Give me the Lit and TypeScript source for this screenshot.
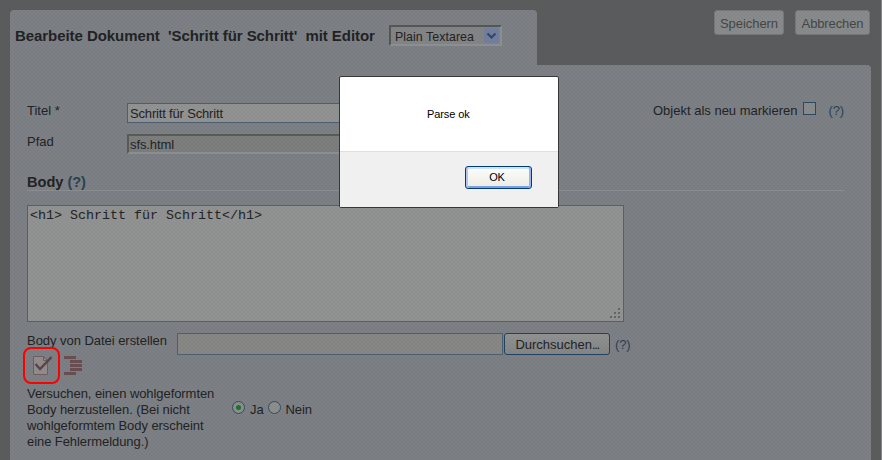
import { LitElement, html, css } from "lit";
import { customElement } from "lit/decorators.js";

@customElement("app-root")
export class AppRoot extends LitElement {
  static styles = css`
    :host { display: block; font: 13px/16px "Liberation Sans", Arial, sans-serif; color: #1f2123; }
    * { box-sizing: border-box; }
    .page { position: relative; display: flex; flex-direction: column; width: 882px; height: 460px; overflow: hidden; background: #5a5c5c; border-right: 1px solid #858788; }
    .veil { position: absolute; inset: 0; background: radial-gradient(circle, rgba(60, 72, 80, 0.07) 0.8px, transparent 1.3px) 0 0 / 4px 4px, radial-gradient(circle, rgba(60, 72, 80, 0.07) 0.8px, transparent 1.3px) 2px 2px / 4px 4px; pointer-events: none; }
    .top { display: flex; height: 55px; margin: 10px 0 0 10px; }
    .tab { width: 527px; border-radius: 4px 4px 0 0; background: #7d8084; display: flex; align-items: flex-start; padding: 15px 0 0 5px; }
    h1 { margin: 2px 0 0; width: 374px; font-size: 15px; line-height: 17px; font-weight: bold; white-space: pre; letter-spacing: -0.06px; }
    .select { width: 113px; height: 21px; border: 2px solid; border-color: #555753 #8f9191 #8f9191 #555753; background: #838586; display: flex; justify-content: space-between; padding: 1px 1px 0 4px; font-size: 12.4px; line-height: 18px; letter-spacing: 0.05px; }
    .arrow { width: 15px; height: 15px; background: #7280a0; border-radius: 2px; display: block; }
    .actions { display: flex; gap: 11px; margin-left: 177px; }
    .action { height: 25px; border: 1px solid #777979; border-radius: 3px; background: #898b8c; color: #444646; font: inherit; padding: 2px 0 0; }
    .save { width: 70px; letter-spacing: -0.05px; }
    .cancel { width: 75px; letter-spacing: -0.12px; }
    .panel { width: 861px; height: 395px; margin-left: 10px; border-radius: 0 4px 0 0; background: #7d8084; padding: 38px 27px 0 17px; }
    .row { display: flex; align-items: flex-start; }
    .label { width: 100px; }
    .field { height: 20px; width: 330px; border: 1px solid #4d6072; background: #929393; color: inherit; font: inherit; letter-spacing: -0.17px; padding: 1px 2px 0; margin: 0; border-radius: 0; }
    .path { height: 20px; border: 2px solid; border-color: #595b57 #8e9090 #8e9090 #595b57; background: #7d7f7e; padding: 1px 1px 0; letter-spacing: -0.1px; }
    .right { margin-left: 196px; display: flex; }
    .check { width: 13px; height: 13px; border: 1px solid #2c4862; background: #898b8c; margin: -1px 13px 0 5px; }
    .help { color: #2a4053; letter-spacing: -0.2px; }
    .second { margin-top: 11px; }
    h2 { margin: 19px 0 0; height: 18px; padding-top: 1px; border-bottom: 1px solid #8d8f90; font-size: 14.6px; line-height: 17px; letter-spacing: 0; }
    textarea { display: block; margin: 14px 0 0; width: 597px; height: 117px; resize: none; border: 1px solid #506375; border-radius: 0; background: #929393; color: #1f2123; padding: 2px 2px; font: 13.33px/15px "Liberation Mono", "Courier New", monospace; outline: none; }
    .area { position: relative; width: 597px; }
    .grip { position: absolute; right: 3px; bottom: 3px; }
    .filerow { margin-top: 11px; height: 22px; }
    .filelabel { width: 150px; letter-spacing: -0.04px; }
    .file { width: 326px; height: 22px; background: #888884; }
    .browse { width: 106px; height: 22px; margin: 0 5px 0 1px; padding: 2px 0 0; font: inherit; color: inherit; border: 1px solid #21425f; border-radius: 3px; background: linear-gradient(#929393, #848686); }
    .dots { letter-spacing: -1.4px; }
    .filerow .help { margin-top: 4px; }
    .icons { position: relative; z-index: 1; display: flex; height: 20px; padding-left: 5px; gap: 10px; }
    .ring { position: absolute; left: -4px; top: -8px; width: 37px; height: 37px; border: 2px solid #ff0000; border-radius: 8px; }
    .wellformed { margin-top: 11px; }
    .text { width: 205px; letter-spacing: -0.07px; }
    .radios { display: flex; margin-top: 16px; }
    .radio { width: 13px; height: 13px; border: 1px solid #314c65; border-radius: 50%; background: #8d8f8f; margin: -1px 5px 0 0; display: flex; align-items: center; justify-content: center; }
    .radio + span { margin-right: 4px; letter-spacing: -0.1px; }
    .on { width: 5px; height: 5px; border-radius: 50%; background: #1c7328; }
    .dialog { position: absolute; z-index: 2; left: 339px; top: 76px; width: 220px; height: 132px; background: #fff; border: 1px solid #363738; border-radius: 2px; color: #000; font-size: 11px; line-height: 14px; display: flex; flex-direction: column; overflow: hidden; }
    .message { height: 74px; padding: 30px 0 0 87px; letter-spacing: -0.1px; }
    .foot { flex: 1; background: #f0f0f0; border-top: 1px solid #dfdfdf; display: flex; justify-content: flex-end; align-items: flex-start; padding: 14px 26px 0 0; }
    .ok { width: 67px; height: 23px; padding: 0 3px 1px 0; font: inherit; letter-spacing: -0.3px; border: 1px solid #003c74; border-radius: 3px; background: linear-gradient(#fdfdfc, #ecebe4); box-shadow: inset 2px 0 #b0c8ef, inset -2px 0 #98b5ea, inset 0 2px #cfe2fb, inset 0 -2px #7c9ee2; }
  `;

  render() {
    return html`
      <div class="page">
        <div class="top">
          <div class="tab">
            <h1>Bearbeite Dokument  'Schritt für Schritt'  mit Editor</h1>
            <div class="select">Plain Textarea
              <svg class="arrow" viewBox="0 0 15 15"><path d="M3.5 5.5l4 4 4-4" fill="none" stroke="#354564" stroke-width="2.2"/></svg>
            </div>
          </div>
          <div class="actions">
            <button class="action save">Speichern</button>
            <button class="action cancel">Abbrechen</button>
          </div>
        </div>
        <div class="panel">
          <div class="row">
            <span class="label">Titel *</span>
            <input class="field" .value=${"Schritt für Schritt"} />
            <div class="right"><span>Objekt als neu markieren</span><span class="check"></span><span class="help">(?)</span></div>
          </div>
          <div class="row second">
            <span class="label">Pfad</span>
            <input class="field path" readonly .value=${"sfs.html"} />
          </div>
          <h2>Body <span class="help">(?)</span></h2>
          <div class="area">
            <textarea spellcheck="false" .value=${"<h1> Schritt für Schritt</h1>"}></textarea>
            <svg class="grip" width="11" height="11" fill="#646663">
              <path d="M8 0h2v2h-2zM4 4h2v2h-2zM8 4h2v2h-2zM0 8h2v2h-2zM4 8h2v2h-2zM8 8h2v2h-2z"/>
            </svg>
          </div>
          <div class="row filerow">
            <span class="filelabel">Body von Datei erstellen</span>
            <input class="field file" />
            <button class="browse">Durchsuchen<span class="dots">...</span></button>
            <span class="help">(?)</span>
          </div>
          <div class="icons">
            <svg width="20" height="20" viewBox="0 0 20 20">
              <path d="M1.500 1.500h10l4 4v14h-14z" fill="#8f8b8c" stroke="#735b5c"/>
              <path d="M11.500 1.500v4h4" fill="none" stroke="#735b5c"/>
              <path d="M3.500 9L8 14 19.500 2" fill="none" stroke="#5c4245" stroke-width="2.4"/>
            </svg>
            <svg width="20" height="20" viewBox="0 0 20 20" fill="#694e51">
              <path d="M2 1h12v3H2zM8 5h12v3H8zM8 9h12v3H8zM8 13h12v3H8zM2 17h12v3H2z"/>
            </svg>
            <div class="ring"></div>
          </div>
          <div class="row wellformed">
            <div class="text">Versuchen, einen wohlgeformten<br />Body herzustellen. (Bei nicht<br />wohlgeformtem Body erscheint<br />eine Fehlermeldung.)</div>
            <div class="radios">
              <span class="radio"><span class="on"></span></span><span>Ja</span>
              <span class="radio"></span><span>Nein</span>
            </div>
          </div>
        </div>
        <div class="veil"></div>
        <div class="dialog" role="alertdialog">
          <div class="message">Parse ok</div>
          <div class="foot"><button class="ok">OK</button></div>
        </div>
      </div>
    `;
  }
}
